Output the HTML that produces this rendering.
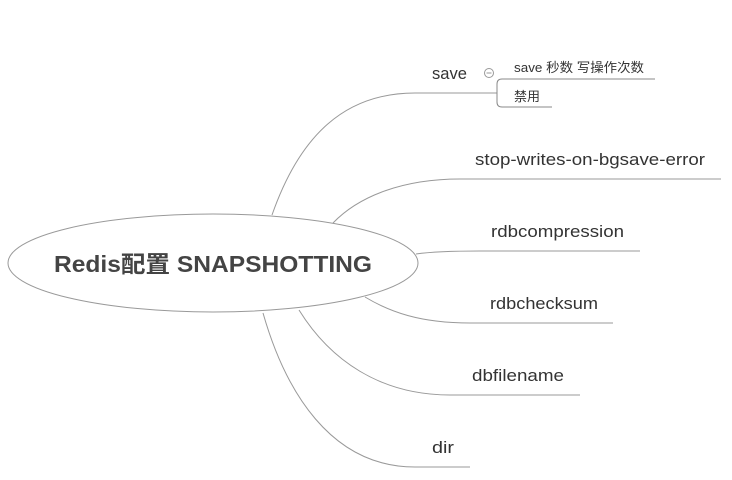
<!DOCTYPE html>
<html><head><meta charset="utf-8"><style>
html,body{margin:0;padding:0;background:#fff;}
svg{display:block;}
text{font-family:"Liberation Sans","Noto Sans CJK SC",sans-serif;fill:#333;}
</style></head><body>
<svg width="732" height="480" xmlns="http://www.w3.org/2000/svg">
<g fill="none" stroke="#999" stroke-width="1">
<path d="M272,215 C300,135 345,93 415,93 L497,93"/>
<path d="M333,223 C360,195 405,179 460,179 L721,179"/>
<path d="M416,254 C430,252 450,251 480,251 L640,251"/>
<path d="M365,297 C390,312 420,323 470,323 L613,323"/>
<path d="M299,310 C330,360 380,395 450,395 L580,395"/>
<path d="M263,313 C285,390 330,467 415,467 L470,467"/>
<path d="M655,79 L502,79 Q497,79 497,84 L497,102 Q497,107 502,107 L552,107" stroke="#888"/>
</g>
<ellipse cx="213" cy="263" rx="205" ry="49" fill="#fff" stroke="#999"/>
<text x="54" y="272" font-size="23" font-weight="bold" textLength="318" lengthAdjust="spacingAndGlyphs" style="fill:#444">Redis配置 SNAPSHOTTING</text>
<circle cx="489" cy="73" r="4.5" fill="none" stroke="#999"/>
<line x1="486.5" y1="73" x2="491.5" y2="73" stroke="#999"/>
<text x="432" y="79" font-size="17" textLength="35" lengthAdjust="spacingAndGlyphs">save</text>
<text x="514" y="72" font-size="13" textLength="130" lengthAdjust="spacingAndGlyphs">save  秒数 写操作次数</text>
<text x="514" y="101" font-size="13" textLength="26" lengthAdjust="spacingAndGlyphs">禁用</text>
<text x="475" y="165" font-size="17" textLength="230" lengthAdjust="spacingAndGlyphs">stop-writes-on-bgsave-error</text>
<text x="491" y="237" font-size="17" textLength="133" lengthAdjust="spacingAndGlyphs">rdbcompression</text>
<text x="490" y="309" font-size="17" textLength="108" lengthAdjust="spacingAndGlyphs">rdbchecksum</text>
<text x="472" y="381" font-size="17" textLength="92" lengthAdjust="spacingAndGlyphs">dbfilename</text>
<text x="432" y="453" font-size="17" textLength="22" lengthAdjust="spacingAndGlyphs">dir</text>
</svg>
</body></html>
